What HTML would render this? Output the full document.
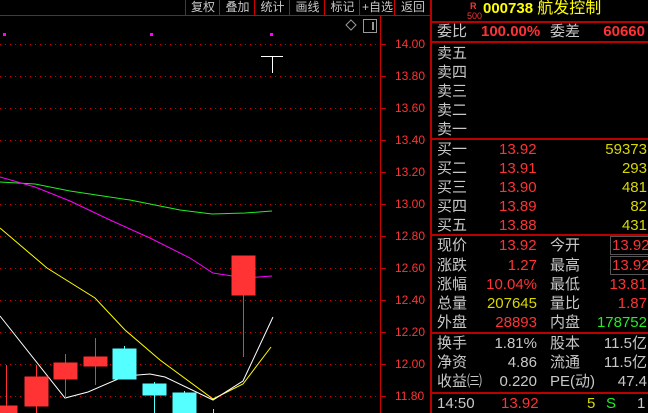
<!DOCTYPE html>
<html><head><meta charset="utf-8"><style>
body{margin:0;width:648px;height:413px;background:#000;overflow:hidden;position:relative;font-family:"Liberation Sans","Noto Sans CJK SC",sans-serif;}
.t{position:absolute;font-size:15px;line-height:19px;white-space:nowrap}
.g{color:#c8c8c8}.r{color:#ff3333}.y{color:#d8d800}.gr{color:#22ee22}
.b{position:absolute;top:0;height:15px;border-left:1px solid #c00;color:#c8c8c8;font-size:12px;line-height:14px;text-align:center}
.hl{position:absolute;left:430px;width:218px;height:2px;background:#b00}
.ax{position:absolute;left:395px;font-size:12px;color:#ff3333}
</style></head><body>
<div class="b" style="left:185px;width:34px">复权</div>
<div class="b" style="left:219px;width:35px">叠加</div>
<div class="b" style="left:254px;width:35px">统计</div>
<div class="b" style="left:289px;width:35px">画线</div>
<div class="b" style="left:324px;width:35px">标记</div>
<div class="b" style="left:359px;width:35px">+自选</div>
<div class="b" style="left:394px;width:36px">返回</div>
<div style="position:absolute;left:0;top:15px;width:430px;height:1px;background:#c00"></div>
<div style="position:absolute;left:380px;top:15px;width:1px;height:398px;background:#c00"></div>
<div style="position:absolute;left:430px;top:0;width:2px;height:413px;background:#b00"></div>
<svg width="430" height="413" style="position:absolute;left:0;top:0">
<g stroke="#c00" stroke-dasharray="1,4" stroke-width="1">
<line x1="0" y1="44.5" x2="380" y2="44.5"/><line x1="0" y1="76.5" x2="380" y2="76.5"/><line x1="0" y1="108.5" x2="380" y2="108.5"/><line x1="0" y1="140.5" x2="380" y2="140.5"/><line x1="0" y1="172.5" x2="380" y2="172.5"/><line x1="0" y1="204.5" x2="380" y2="204.5"/><line x1="0" y1="236.5" x2="380" y2="236.5"/><line x1="0" y1="268.5" x2="380" y2="268.5"/><line x1="0" y1="300.5" x2="380" y2="300.5"/><line x1="0" y1="332.5" x2="380" y2="332.5"/><line x1="0" y1="364.5" x2="380" y2="364.5"/><line x1="0" y1="396.5" x2="380" y2="396.5"/>
</g>
<g stroke="#c00"><line x1="380" y1="44.5" x2="386" y2="44.5"/><line x1="380" y1="76.5" x2="386" y2="76.5"/><line x1="380" y1="108.5" x2="386" y2="108.5"/><line x1="380" y1="140.5" x2="386" y2="140.5"/><line x1="380" y1="172.5" x2="386" y2="172.5"/><line x1="380" y1="204.5" x2="386" y2="204.5"/><line x1="380" y1="236.5" x2="386" y2="236.5"/><line x1="380" y1="268.5" x2="386" y2="268.5"/><line x1="380" y1="300.5" x2="386" y2="300.5"/><line x1="380" y1="332.5" x2="386" y2="332.5"/><line x1="380" y1="364.5" x2="386" y2="364.5"/><line x1="380" y1="396.5" x2="386" y2="396.5"/></g>
<rect x="3" y="33" width="3" height="3" fill="#f0f"/><rect x="150" y="33" width="3" height="3" fill="#f0f"/><rect x="270" y="33" width="3" height="3" fill="#f0f"/>
<path d="M351 20 L356 25 L351 30 L346 25Z" fill="none" stroke="#999"/>
<rect x="363.5" y="19.5" width="13" height="13" fill="none" stroke="#999"/><rect x="372" y="22" width="2" height="8" fill="#999"/>
<path d="M261 56.5 H283 M272.5 56 V73" stroke="#fff"/>
<polyline fill="none" stroke="#22ee22" points="0,182 35,184 70,191 130,200 180,210 212,214 245,213 272,211"/>
<polyline fill="none" stroke="#f0f" points="0,177 35,187 70,201 110,220 150,238 190,258 213,273 245,278 272,276"/>
<polyline fill="none" stroke="#ff0" points="0,228 47,268 95,298 125,330 160,360 213,399 243,384 271,347"/>
<polyline fill="none" stroke="#fff" points="0,316 65,398 88,392 125,376 150,374 165,377 213,400 243,381 273,317"/>
<g stroke="#ff3333" fill="#ff3333">
<line x1="6.5" y1="365" x2="6.5" y2="413"/><rect x="0" y="406" width="17" height="7"/>
<line x1="36.5" y1="365" x2="36.5" y2="413"/><rect x="25" y="377" width="23" height="29"/>
<line x1="65.5" y1="354" x2="65.5" y2="398"/><rect x="54" y="363" width="23" height="16"/>
<line x1="95.5" y1="338" x2="95.5" y2="385"/><rect x="84" y="357" width="23" height="9"/>
<line x1="243.5" y1="256" x2="243.5" y2="357"/><rect x="232" y="256" width="23" height="39"/>
</g>
<g stroke="#55ffff" fill="#55ffff">
<line x1="124.5" y1="346" x2="124.5" y2="379"/><rect x="113" y="349" width="23" height="30"/>
<line x1="154.5" y1="382" x2="154.5" y2="413"/><rect x="143" y="384" width="23" height="11"/>
<line x1="184.5" y1="391" x2="184.5" y2="413"/><rect x="173" y="393" width="23" height="20"/>
<line x1="213.5" y1="409" x2="213.5" y2="413"/>
</g>
</svg>
<div class="ax" style="top:37px">14.00</div><div class="ax" style="top:69px">13.80</div><div class="ax" style="top:101px">13.60</div><div class="ax" style="top:133px">13.40</div><div class="ax" style="top:165px">13.20</div><div class="ax" style="top:197px">13.00</div><div class="ax" style="top:229px">12.80</div><div class="ax" style="top:261px">12.60</div><div class="ax" style="top:293px">12.40</div><div class="ax" style="top:325px">12.20</div><div class="ax" style="top:357px">12.00</div><div class="ax" style="top:389px">11.80</div>
<div class="t r" style="left:470px;top:-3px;font-size:9px;font-weight:bold">R</div>
<div class="t r" style="left:467px;top:7px;font-size:9px">500</div>
<div class="t" style="left:483px;top:-1px;color:#ff0;font-weight:bold;font-size:15px;line-height:20px">000738 <span style="font-weight:normal;font-size:16px">航发控制</span></div>
<div class="hl" style="top:21px"></div>
<div class="t g" style="left:437px;top:22px">委比</div><div class="t r" style="left:481px;top:22px;font-weight:bold">100.00%</div>
<div class="t g" style="left:550px;top:22px">委差</div><div class="t r" style="right:3px;top:22px;font-weight:bold">60660</div>
<div class="hl" style="top:41px"></div>
<div class="t g" style="left:437px;top:44px">卖五</div><div class="t g" style="left:437px;top:63px">卖四</div><div class="t g" style="left:437px;top:82px">卖三</div><div class="t g" style="left:437px;top:101px">卖二</div><div class="t g" style="left:437px;top:120px">卖一</div>
<div class="hl" style="top:138px"></div>
<div class="t g" style="left:437px;top:140px">买一</div><div class="t r" style="left:499px;top:140px">13.92</div><div class="t y" style="right:1px;top:140px">59373</div>
<div class="t g" style="left:437px;top:159px">买二</div><div class="t r" style="left:499px;top:159px">13.91</div><div class="t y" style="right:1px;top:159px">293</div>
<div class="t g" style="left:437px;top:178px">买三</div><div class="t r" style="left:499px;top:178px">13.90</div><div class="t y" style="right:1px;top:178px">481</div>
<div class="t g" style="left:437px;top:197px">买四</div><div class="t r" style="left:499px;top:197px">13.89</div><div class="t y" style="right:1px;top:197px">82</div>
<div class="t g" style="left:437px;top:216px">买五</div><div class="t r" style="left:499px;top:216px">13.88</div><div class="t y" style="right:1px;top:216px">431</div>
<div class="hl" style="top:234px"></div>
<div class="t g" style="left:437px;top:236px">现价</div><div class="t r" style="left:499px;top:236px">13.92</div><div class="t g" style="left:550px;top:236px">今开</div><div class="t r" style="left:610px;top:236px;border:1px solid #555;padding:0 1px;line-height:17px">13.92</div>
<div class="t g" style="left:437px;top:256px">涨跌</div><div class="t r" style="right:111px;top:256px">1.27</div><div class="t g" style="left:550px;top:256px">最高</div><div class="t r" style="left:610px;top:256px;border:1px solid #555;padding:0 1px;line-height:17px">13.92</div>
<div class="t g" style="left:437px;top:275px">涨幅</div><div class="t r" style="right:111px;top:275px">10.04%</div><div class="t g" style="left:550px;top:275px">最低</div><div class="t r" style="right:1px;top:275px">13.81</div>
<div class="t g" style="left:437px;top:294px">总量</div><div class="t y" style="right:111px;top:294px">207645</div><div class="t g" style="left:550px;top:294px">量比</div><div class="t r" style="right:1px;top:294px">1.87</div>
<div class="t g" style="left:437px;top:313px">外盘</div><div class="t r" style="right:111px;top:313px">28893</div><div class="t g" style="left:550px;top:313px">内盘</div><div class="t gr" style="right:1px;top:313px">178752</div>
<div class="hl" style="top:332px"></div>
<div class="t g" style="left:437px;top:334px">换手</div><div class="t g" style="right:111px;top:334px">1.81%</div><div class="t g" style="left:550px;top:334px">股本</div><div class="t g" style="right:1px;top:334px">11.5亿</div>
<div class="t g" style="left:437px;top:353px">净资</div><div class="t g" style="right:111px;top:353px">4.86</div><div class="t g" style="left:550px;top:353px">流通</div><div class="t g" style="right:1px;top:353px">11.5亿</div>
<div class="t g" style="left:437px;top:372px">收益㈢</div><div class="t g" style="right:111px;top:372px">0.220</div><div class="t g" style="left:550px;top:372px">PE(动)</div><div class="t g" style="right:1px;top:372px">47.4</div>
<div class="hl" style="top:392px"></div>
<div class="t g" style="left:437px;top:394px">14:50</div><div class="t r" style="left:501px;top:394px">13.92</div><div class="t y" style="left:587px;top:394px">5</div><div class="t gr" style="left:606px;top:394px">S</div><div class="t g" style="left:637px;top:394px">1</div>
</body></html>
